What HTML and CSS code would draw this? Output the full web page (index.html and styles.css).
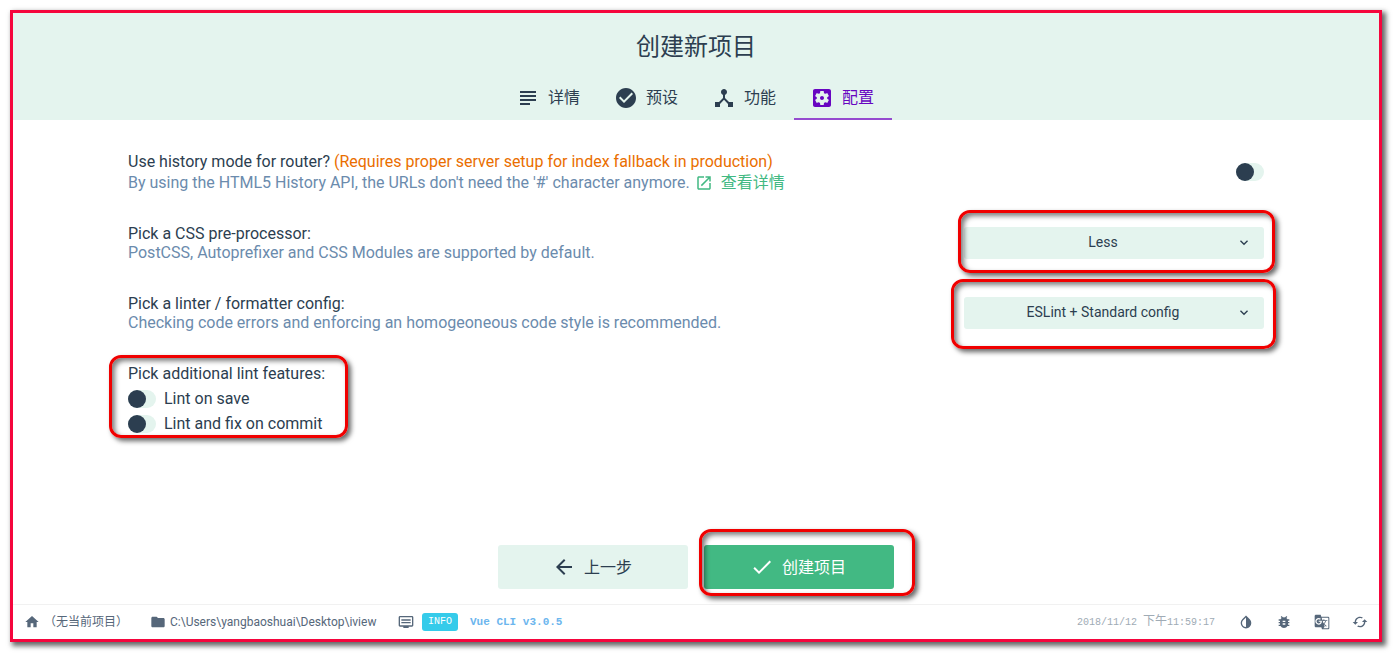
FILE: index.html
```
<!DOCTYPE html>
<html lang="zh-CN">
  <head>
    <meta charset="utf-8">
    <meta name="viewport" content="width=device-width, initial-scale=1">
    <title>创建新项目</title>
    <link rel="stylesheet" href="styles.css">
  </head>
  <body>
    <div class="window">
      <header class="header">
        <h1>创建新项目</h1>
        <nav class="tabs">
          <button class="tab">
            <svg class="icon" viewBox="0 0 24 24"><path d="M4 5h16v2H4zM4 9h16v2H4zM4 13h16v2H4zM4 17h10v2H4z"/></svg>
            <span>详情</span>
          </button>
          <button class="tab">
            <svg class="icon" viewBox="0 0 24 24"><path d="M12 2C6.480 2 2 6.480 2 12s4.480 10 10 10 10-4.480 10-10S17.520 2 12 2zm-2 15l-5-5 1.410-1.410L10 14.170l7.590-7.590L19 8l-9 9z"/></svg>
            <span>预设</span>
          </button>
          <button class="tab">
            <svg class="icon" viewBox="0 0 24 24"><path d="M17 16l-4-4V8.820C14.160 8.400 15 7.300 15 6c0-1.660-1.340-3-3-3S9 4.340 9 6c0 1.300.840 2.400 2 2.820V12l-4 4H3v5h5v-3.050l4-4.200 4 4.200V21h5v-5h-4z"/></svg>
            <span>功能</span>
          </button>
          <button class="tab selected">
            <svg class="icon" viewBox="0 0 24 24"><path d="M12 10c-1.100 0-2 .900-2 2s.900 2 2 2 2-.900 2-2-.900-2-2-2zm7-7H5c-1.110 0-2 .900-2 2v14c0 1.100.890 2 2 2h14c1.110 0 2-.900 2-2V5c0-1.100-.890-2-2-2zm-1.750 9c0 .230-.020.460-.050.680l1.480 1.160c.130.110.170.300.080.450l-1.400 2.420c-.090.150-.270.210-.430.150l-1.740-.700c-.360.280-.760.510-1.180.690l-.260 1.850c-.030.170-.180.300-.350.300h-2.800c-.170 0-.320-.130-.350-.290l-.260-1.850c-.430-.180-.820-.410-1.180-.690l-1.740.700c-.160.060-.340 0-.430-.150l-1.400-2.420c-.090-.150-.050-.340.080-.450l1.480-1.160c-.030-.230-.050-.460-.050-.690s.020-.460.050-.680l-1.480-1.160c-.130-.110-.170-.300-.080-.450l1.400-2.420c.090-.150.270-.210.430-.150l1.740.700c.360-.280.760-.510 1.180-.690l.260-1.850c.030-.170.180-.300.350-.300h2.800c.170 0 .320.130.350.290l.260 1.850c.430.180.820.410 1.180.690l1.740-.700c.160-.060.340 0 .430.150l1.400 2.420c.090.150.050.340-.080.450l-1.480 1.160c.030.230.050.460.050.690z"/></svg>
            <span>配置</span>
          </button>
        </nav>
      </header>

      <main class="content">
        <div class="row">
          <div class="info">
            <label class="name" for="history">Use history mode for router? <span class="warning">(Requires proper server setup for index fallback in production)</span></label>
            <div class="description with-link">
              <span>By using the HTML5 History API, the URLs don't need the '#' character anymore.</span>
              <a href="#">
                <svg class="icon" viewBox="0 0 24 24"><path d="M19 19H5V5h7V3H5c-1.110 0-2 .900-2 2v14c0 1.100.890 2 2 2h14c1.100 0 2-.900 2-2v-7h-2v7zM14 3v2h3.590l-9.830 9.830 1.410 1.410L19 6.410V10h2V3h-7z"/></svg>
                <span>查看详情</span>
              </a>
            </div>
          </div>
          <input type="checkbox" class="switch" id="history">
        </div>

        <div class="row">
          <div class="info">
            <label class="name" for="css">Pick a CSS pre-processor:</label>
            <div class="description">PostCSS, Autoprefixer and CSS Modules are supported by default.</div>
          </div>
          <div class="select">
            <select id="css"><option>Less</option></select>
            <svg class="arrow" viewBox="0 0 24 24"><path d="M7.410 7.840L12 12.420l4.590-4.580L18 9.250l-6 6-6-6z"/></svg>
            <div class="marker marker-css"></div>
          </div>
        </div>

        <div class="row">
          <div class="info">
            <label class="name" for="linter">Pick a linter / formatter config:</label>
            <div class="description">Checking code errors and enforcing an homogeoneous code style is recommended.</div>
          </div>
          <div class="select">
            <select id="linter"><option>ESLint + Standard config</option></select>
            <svg class="arrow" viewBox="0 0 24 24"><path d="M7.410 7.840L12 12.420l4.590-4.580L18 9.250l-6 6-6-6z"/></svg>
            <div class="marker marker-linter"></div>
          </div>
        </div>

        <div class="features">
          <div class="name">Pick additional lint features:</div>
          <div class="feature-list">
            <label class="feature"><input type="checkbox" class="switch"> Lint on save</label>
            <label class="feature"><input type="checkbox" class="switch"> Lint and fix on commit</label>
          </div>
          <div class="marker marker-features"></div>
        </div>
      </main>

      <div class="actions">
        <button class="button">
          <svg class="icon" viewBox="0 0 24 24"><path d="M20 11H7.830l5.590-5.590L12 4l-8 8 8 8 1.410-1.410L7.830 13H20v-2z"/></svg>
          <span>上一步</span>
        </button>
        <div class="create">
          <button class="button primary">
            <svg class="icon" viewBox="0 0 24 24"><path d="M9 16.170L4.830 12l-1.420 1.410L9 19 21 7l-1.410-1.410z"/></svg>
            <span>创建项目</span>
          </button>
          <div class="marker marker-create"></div>
        </div>
      </div>

      <footer class="status-bar">
        <a class="status project" href="#">
          <svg class="icon" viewBox="0 0 24 24"><path d="M10 20v-6h4v6h5v-8h3L12 3 2 12h3v8z"/></svg>
          <span>（无当前项目）</span>
        </a>
        <div class="status path">
          <svg class="icon" viewBox="0 0 24 24"><path d="M10 4H4c-1.100 0-1.990.900-1.990 2L2 18c0 1.100.900 2 2 2h16c1.100 0 2-.900 2-2V8c0-1.100-.900-2-2-2h-8l-2-2z"/></svg>
          <span>C:\Users\yangbaoshuai\Desktop\iview</span>
        </div>
        <div class="status log">
          <svg class="icon" viewBox="0 0 24 24"><path d="M21 3H3c-1.100 0-2 .900-2 2v12c0 1.100.900 2 2 2h5v2h8v-2h5c1.100 0 2-.900 2-2V5c0-1.100-.900-2-2-2zm0 14H3V5h18v12zM19 8H5v2h14zM19 12H5v2h14z"/></svg>
          <span class="badge">INFO</span>
          <span class="message">Vue CLI v3.0.5</span>
        </div>
        <time class="date">2018/11/12 <span>下午</span>11:59:17</time>
        <div class="tools">
          <button class="tool" aria-label="切换主题">
            <svg class="icon" viewBox="0 0 24 24"><path d="M17.660 7.930L12 2.270 6.340 7.930c-3.120 3.120-3.120 8.190 0 11.310C7.900 20.800 9.950 21.580 12 21.580s4.100-.780 5.660-2.340c3.120-3.120 3.120-8.190 0-11.310zM12 19.590c-1.600 0-3.110-.620-4.240-1.760C6.620 16.690 6 15.190 6 13.590s.620-3.110 1.760-4.240L12 5.100v14.490z"/></svg>
          </button>
          <button class="tool" aria-label="报告错误">
            <svg class="icon" viewBox="0 0 24 24"><path d="M20 8h-2.810c-.450-.780-1.070-1.450-1.820-1.960L17 4.410 15.590 3l-2.170 2.170C12.960 5.060 12.490 5 12 5s-.960.060-1.410.170L8.410 3 7 4.410l1.620 1.630C7.880 6.550 7.260 7.220 6.810 8H4v2h2.090c-.050.330-.090.660-.090 1v1H4v2h2v1c0 .340.040.670.090 1H4v2h2.810c1.040 1.790 2.970 3 5.190 3s4.150-1.210 5.190-3H20v-2h-2.090c.050-.330.090-.660.090-1v-1h2v-2h-2v-1c0-.340-.040-.670-.090-1H20V8zm-6 8h-4v-2h4v2zm0-4h-4v-2h4v2z"/></svg>
          </button>
          <button class="tool" aria-label="翻译">
            <svg class="icon" viewBox="0 0 24 24"><path fill-rule="evenodd" d="M21 4H11l-1-3H3c-1.100 0-2 .900-2 2v15c0 1.100.900 2 2 2h8l1 3h9c1.100 0 2-.900 2-2V6c0-1.100-.900-2-2-2zM7 16c-2.760 0-5-2.240-5-5s2.240-5 5-5c1.350 0 2.480.500 3.350 1.300L9.030 8.570c-.380-.360-1.040-.780-2.030-.780-1.740 0-3.150 1.440-3.150 3.210S5.260 14.210 7 14.210c2.010 0 2.840-1.440 2.920-2.410H7v-1.710h4.680c.070.310.120.610.120 1.020C11.800 13.970 9.890 16 7 16zm6.170-5.420h3.700c-.430 1.250-1.110 2.430-2.050 3.470-.310-.350-.600-.720-.860-1.110l-.790-2.360zm8.330 9.920c0 .550-.450 1-1 1H14l2-2.500-1.040-3.100 3.100 3.100.920-.920-3.300-3.250.020-.020c1.130-1.250 1.930-2.690 2.400-4.220H20v-1.300h-4.530V8h-1.290v1.290h-1.440L11.460 5.500h9.040c.550 0 1 .450 1 1v14z"/></svg>
          </button>
          <button class="tool" aria-label="刷新">
            <svg class="icon" viewBox="0 0 24 24"><path d="M19 8l-4 4h3c0 3.310-2.690 6-6 6-1.010 0-1.970-.250-2.800-.700l-1.460 1.460C8.970 19.540 10.430 20 12 20c4.420 0 8-3.580 8-8h3l-4-4zM6 12c0-3.310 2.690-6 6-6 1.010 0 1.970.250 2.800.700l1.460-1.460C15.030 4.460 13.570 4 12 4c-4.420 0-8 3.580-8 8H1l4 4 4-4H6z"/></svg>
          </button>
        </div>
      </footer>
    </div>
  </body>
</html>
```

FILE: styles.css
```
* {
  box-sizing: border-box;
}
body {
  margin: 0;
  padding: 10px 11px 11px 10px;
  min-height: 100vh;
  display: flex;
  background: #fff;
  color: #2c3e50;
  font-family: Roboto, "Noto Sans CJK SC", sans-serif;
  font-size: 16px;
  line-height: 19px;
}
button, select {
  font: inherit;
  color: inherit;
  border: none;
  cursor: pointer;
}
a {
  text-decoration: none;
}
.icon {
  width: 24px;
  height: 24px;
  fill: currentColor;
  flex: none;
}
.window {
  flex: 1;
  display: flex;
  flex-direction: column;
  border: 3px solid #f5053c;
  box-shadow: 3px 3px 5px 1px rgba(0, 0, 0, 0.6);
}

/* header */
.header {
  background: #e4f4ee;
}
.header h1 {
  margin: 0;
  padding: 16px 0 10px;
  font-size: 24px;
  line-height: 36px;
  font-weight: 400;
  text-align: center;
}
.tabs {
  display: flex;
  justify-content: center;
}
.tab {
  width: 98px;
  height: 45px;
  padding: 2px 2px 0 0;
  display: flex;
  align-items: center;
  justify-content: center;
  gap: 8px;
  background: none;
  border-bottom: 2px solid transparent;
}
.tab.selected {
  color: #6806c1;
  border-color: #954bcf;
}

/* options */
.content {
  flex: 1;
  width: 100%;
  max-width: 1136px;
  margin: 0 auto;
  padding-top: 32px;
}
.row {
  display: flex;
  align-items: center;
  justify-content: space-between;
  margin-bottom: 32px;
}
.name {
  display: block;
}
.warning {
  color: #ea6e00;
}
.description {
  color: #6b8bad;
}
.with-link {
  display: flex;
  align-items: center;
  height: 21px;
  padding-top: 2px;
}
.with-link a {
  display: flex;
  align-items: center;
  gap: 8px;
  margin-left: 5px;
  color: #42b983;
}
.with-link .icon {
  width: 18px;
  height: 18px;
}
.switch {
  appearance: none;
  flex: none;
  width: 28px;
  height: 18px;
  margin: 0;
  border-radius: 9px;
  background: #e4f4ee;
  cursor: pointer;
}
.switch::before {
  content: "";
  display: block;
  width: 18px;
  height: 18px;
  border-radius: 50%;
  background: #2c3e50;
}
.switch:checked::before {
  margin-left: 10px;
}
.select {
  position: relative;
  height: 32px;
  flex: 0 0 300px;
}
.select select {
  appearance: none;
  width: 100%;
  height: 32px;
  padding: 0 36px 2px 14px;
  border-radius: 3px;
  background: #e4f4ee;
  font-size: 14px;
  text-align: center;
  text-align-last: center;
}
.arrow {
  position: absolute;
  top: 8px;
  right: 12px;
  width: 16px;
  height: 16px;
  fill: currentColor;
  pointer-events: none;
}
.features {
  position: relative;
  width: max-content;
}
.feature-list {
  margin-top: 3px;
}
.feature {
  display: flex;
  align-items: center;
  gap: 8px;
  height: 25px;
}

/* red marks round the choices */
.marker {
  position: absolute;
  border: 3px solid #f00000;
  border-radius: 12px;
  box-shadow: 3px 3px 5px rgba(0, 0, 0, 0.6), inset 3px 3px 5px rgba(0, 0, 0, 0.5);
  pointer-events: none;
}
.marker-css {
  inset: -17px -11px -14px -6px;
}
.marker-linter {
  inset: -18px -12px -20px -13px;
}
.marker-features {
  inset: -9px -23px -2px -19px;
}
.marker-create {
  inset: -16px -21px -7px -5px;
}

/* bottom */
.actions {
  display: flex;
  justify-content: center;
  gap: 16px;
  padding-bottom: 15px;
}
.create {
  position: relative;
}
.button {
  width: 190px;
  height: 44px;
  padding: 0 2px 0 0;
  display: flex;
  align-items: center;
  justify-content: center;
  gap: 8px;
  border-radius: 3px;
  background: #e4f4ee;
}
.button.primary {
  background: #42b983;
  color: #fff;
}
.status-bar {
  display: flex;
  align-items: center;
  height: 35px;
  padding-left: 11px;
  border-top: 1px solid #f1f1f1;
  color: #56677a;
  font-size: 12px;
}
.status-bar .icon {
  width: 16px;
  height: 16px;
}
.status {
  display: flex;
  align-items: center;
  gap: 4px;
  color: inherit;
}
.project {
  width: 126px;
}
.project span {
  white-space: nowrap;
}
.path {
  width: 248px;
}
.badge {
  margin: 0 8px 0 4px;
  padding: 0 6px;
  border-radius: 3px;
  background: #35cbea;
  color: #fff;
  font: 10px/18px "Liberation Mono", monospace;
}
.message {
  color: #6cb6ee;
  font: bold 11px/18px "Liberation Mono", monospace;
}
.date {
  margin-left: auto;
  color: #a0abb5;
  font: 10px/18px "Liberation Mono", "Noto Sans CJK SC", monospace;
}
.date span {
  font-size: 12px;
}
.tools {
  display: flex;
  margin-left: 12px;
}
.tool {
  width: 38px;
  height: 34px;
  padding: 0;
  display: flex;
  align-items: center;
  justify-content: center;
  background: none;
}
```
